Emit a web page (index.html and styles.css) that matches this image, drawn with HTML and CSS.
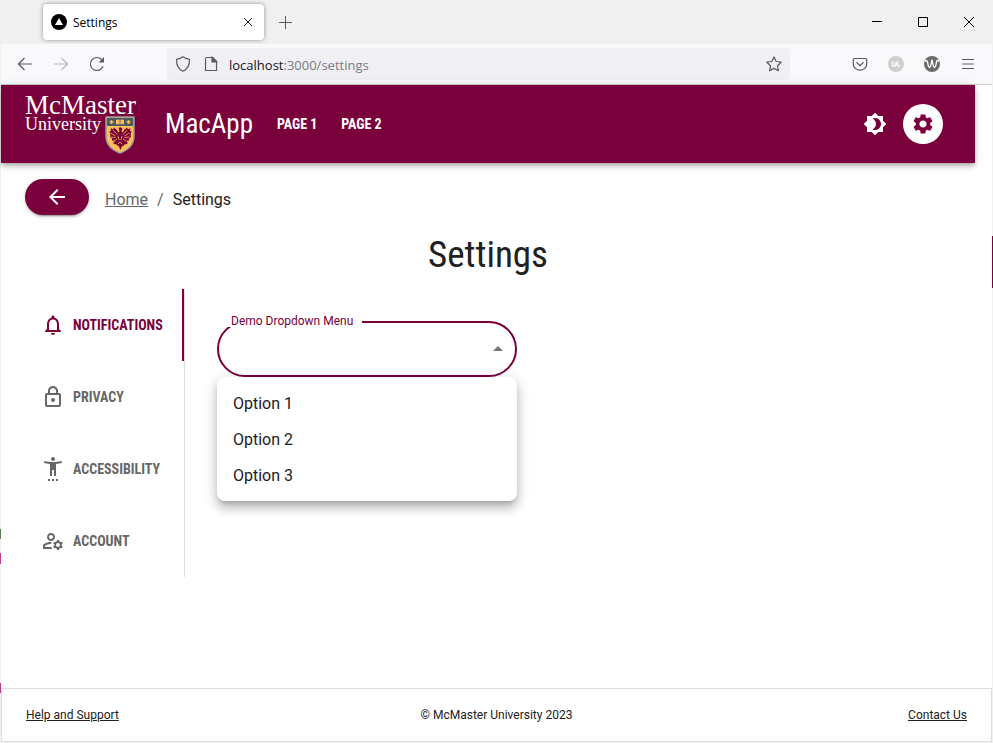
FILE: index.html
```html
<!DOCTYPE html>
<html lang="en">
<head>
<meta charset="utf-8">
<title>Settings</title>
<link rel="stylesheet" href="styles.css">
</head>
<body>
<div class="window">
  <div class="titlebar">
    <div class="tab">
      <svg class="favicon" viewBox="0 0 16 16" aria-hidden="true"><circle cx="8" cy="8" r="8"/><path d="M8 4l4 7H4z" fill="#fff"/></svg>
      <span class="tab-title">Settings</span>
      <button class="tab-close" aria-label="Close tab"><svg width="10" height="10" viewBox="0 0 10 10"><path d="M1 1l8 8M9 1l-8 8" stroke="#222" fill="none"/></svg></button>
    </div>
    <button class="new-tab" aria-label="New tab"><svg width="13" height="13" viewBox="0 0 13 13"><path d="M6.500 0v13M0 6.500h13" stroke="#5b5b66" fill="none"/></svg></button>
    <div class="window-controls">
      <button aria-label="Minimize"><svg width="12" height="12" viewBox="0 0 12 12"><path d="M1 5.500h10" stroke="#000"/></svg></button>
      <button aria-label="Maximize"><svg width="12" height="12" viewBox="0 0 12 12"><path d="M1.500 1.500h9v9h-9z" stroke="#000" fill="none"/></svg></button>
      <button aria-label="Close"><svg width="12" height="12" viewBox="0 0 12 12"><path d="M1 1l10 10M11 1L1 11" stroke="#000"/></svg></button>
    </div>
  </div>
  <div class="toolbar">
    <button class="tool" aria-label="Back"><svg class="line" viewBox="0 0 16 16"><path d="M15 8H1.500M7.500 2l-6 6 6 6"/></svg></button>
    <button class="tool faded" aria-label="Forward"><svg class="line" viewBox="0 0 16 16"><path d="M1 8h13.500M8.500 2l6 6-6 6"/></svg></button>
    <button class="tool" aria-label="Reload"><svg class="line" viewBox="0 0 16 16"><path d="M14 10.200A6.500 6.500 0 1 1 12.600 3.500"/><path d="M15 1v5.500H9.500z" fill="#5b5b66" stroke="none"/></svg></button>
    <div class="address">
      <svg class="line" viewBox="0 0 16 16" aria-hidden="true"><path d="M8 .8c2 1.600 4 2.200 6.500 2.500C14.700 8.500 13 13 8 15.300 3 13 1.300 8.500 1.500 3.300 4 3 6 2.400 8 .8z"/></svg>
      <svg class="line page-icon" viewBox="0 0 16 16" aria-hidden="true"><path d="M4 1.500h5.500L13.500 5.500v9h-11V3q0-1.500 1.500-1.500z"/><path d="M9 1v5h5z" fill="#5b5b66"/></svg>
      <span class="url">localhost<span class="url-rest">:3000/settings</span></span>
      <button class="star" aria-label="Bookmark"><svg class="line" viewBox="0 0 16 16"><path d="M8 .9l2.200 4.600 5 .7-3.700 3.500.9 5.100L8 12.400l-4.400 2.400.9-5.100L.8 6.200l5-.7z"/></svg></button>
    </div>
    <div class="extensions">
      <button class="tool" aria-label="Save to Pocket"><svg class="line" viewBox="0 0 16 16"><path d="M2.500 2.500h11q1.200 0 1.200 1.200V8a6.700 6.200 0 0 1-13.400 0V3.700q0-1.200 1.200-1.200zM4.500 6.300L8 9.700l3.500-3.400"/></svg></button>
      <button class="tool" aria-label="Extension"><svg viewBox="0 0 16 16"><circle cx="8" cy="8" r="8" fill="#cfcfcf"/><path d="M4.500 5v3q0 2 1.700 2T8 8V6M9.500 5v3.500q0 1.500 1.500 1.500h1" fill="none" stroke="#f5f5f5" stroke-width="1.800"/></svg></button>
      <button class="tool" aria-label="Extension"><svg viewBox="0 0 16 16"><circle cx="8" cy="8" r="8" fill="#6b6b6b"/><path d="M1 5.500Q3 3 3.700 7T5.500 11.500Q6.800 11 8 4q1.200 7 2.500 7.500 1.100 0 1.800-4.500T15 5.500" fill="none" stroke="#fff" stroke-width="1.400" stroke-linejoin="round"/></svg></button>
      <button class="tool" aria-label="Menu"><svg class="line" viewBox="0 0 16 16"><path d="M2 3.500h12M2 8h12M2 12.500h12"/></svg></button>
    </div>
  </div>

  <div class="page">
    <header class="app-bar">
      <a class="logo" href="#" aria-label="McMaster University">
        <span class="logo-name">McMaster</span>
        <span class="logo-sub">University
          <svg class="crest" viewBox="0 0 30 38" aria-hidden="true">
            <path d="M1 1h28v19c0 8-6 14-14 17C7 34 1 28 1 20z" fill="#fdbf57" stroke="#9b9b98" stroke-width="1.500"/>
            <path d="M2 2h26v8H2z" fill="#4c5963"/>
            <path d="M11 4q2-1 4 0 2-1 4 0v4.500q-2-1-4 0-2-1-4 0z" fill="#fdbf57"/>
            <path d="M15 4v4.500" stroke="#4c5963" stroke-width=".8"/>
            <path d="M6.500 4v4M4.500 6h4M23.500 4v4M21.500 6h4" stroke="#fdbf57" stroke-width="1.500"/>
            <path d="M15 11l2.500 1.500-1 3 1.500 1 1-2.500 3-2.500 1 2 2.500-1.500-.5 3 1.500 0-1 4 .5 2-2 1.500 0 2-3 .5 2 2-2 1.500-1.500-.5-.5 2-1.500-.5-2 4.500-2-4.500-1.500.5-.5-2-1.500.5-2-1.500 2-2-3-.5 0-2-2-1.500.5-2-1-4 1.500 0-.5-3 2.500 1.500 1-2 3 2.500 1 2.500 1.500-1-1-3z" fill="#7a003c"/>
            <path d="M5.500 17l5 3M5.500 21l5 .5M24.500 17l-5 3M24.500 21l-5 .5M8 14l4 4.500M22 14l-4 4.500M13 20l1 4M17 20l-1 4M9 25l3-2M21 25l-3-2M13 28l2-2 2 2" fill="none" stroke="#fdbf57" stroke-width=".8"/>
          </svg>
        </span>
      </a>
      <a class="brand" href="#">MacApp</a>
      <nav class="pages">
        <a href="#">PAGE 1</a>
        <a href="#">PAGE 2</a>
      </nav>
      <div class="actions">
        <button class="theme" aria-label="Toggle theme"><svg class="icon" viewBox="0 0 24 24"><path d="M20 8.690V4h-4.690L12 .69 8.690 4H4v4.690L.69 12 4 15.310V20h4.690L12 23.310 15.310 20H20v-4.690L23.310 12 20 8.690zM12 18c-.89 0-1.740-.2-2.500-.55C11.560 16.500 13 14.420 13 12s-1.440-4.500-3.500-5.450C10.260 6.200 11.110 6 12 6c3.310 0 6 2.690 6 6s-2.690 6-6 6z"/></svg></button>
        <button class="gear" aria-label="Settings"><svg class="icon" viewBox="0 0 24 24"><path d="M19.140 12.940c.04-.3.06-.61.06-.94 0-.32-.02-.64-.07-.94l2.030-1.580c.18-.14.23-.41.12-.61l-1.920-3.320c-.12-.22-.37-.29-.59-.22l-2.390.96c-.5-.38-1.030-.7-1.620-.94l-.36-2.540c-.04-.24-.24-.41-.48-.41h-3.840c-.24 0-.43.17-.47.41l-.36 2.540c-.59.24-1.130.57-1.620.94l-2.390-.96c-.22-.08-.47 0-.59.22L2.740 8.870c-.12.21-.08.47.12.61l2.030 1.580c-.05.3-.09.63-.09.94s.02.64.07.94l-2.030 1.580c-.18.14-.23.41-.12.61l1.920 3.320c.12.22.37.29.59.22l2.390-.96c.5.38 1.030.7 1.620.94l.36 2.540c.05.24.24.41.48.41h3.840c.24 0 .44-.17.47-.41l.36-2.540c.59-.24 1.130-.56 1.620-.94l2.390.96c.22.08.47 0 .59-.22l1.920-3.320c.12-.22.07-.47-.12-.61l-2.010-1.580zM12 15.600c-1.980 0-3.600-1.620-3.600-3.600s1.620-3.600 3.600-3.600 3.600 1.620 3.600 3.600-1.620 3.600-3.600 3.600z"/></svg></button>
      </div>
    </header>

    <main class="content">
      <div class="crumb-row">
        <button class="back" aria-label="Go back"><svg class="icon" viewBox="0 0 24 24"><path d="M20 11H7.830l5.590-5.590L12 4l-8 8 8 8 1.410-1.410L7.830 13H20v-2z"/></svg></button>
        <nav class="crumbs" aria-label="Breadcrumb"><a href="#">Home</a><span class="slash">/</span><span>Settings</span></nav>
      </div>
      <h1>Settings</h1>
      <div class="settings">
        <div class="side-tabs" role="tablist" aria-orientation="vertical">
          <button class="side-tab active" role="tab" aria-selected="true"><svg class="icon" viewBox="0 0 24 24"><path d="M12 22c1.100 0 2-.9 2-2h-4c0 1.100.9 2 2 2zm6-6v-5c0-3.070-1.630-5.640-4.500-6.320V4c0-.83-.67-1.500-1.500-1.500s-1.500.67-1.500 1.500v.68C7.640 5.360 6 7.920 6 11v5l-2 2v1h16v-1l-2-2zm-2 1H8v-6c0-2.480 1.510-4.500 4-4.500s4 2.020 4 4.500v6z"/></svg>NOTIFICATIONS</button>
          <button class="side-tab" role="tab" aria-selected="false"><svg class="icon" viewBox="0 0 24 24"><path d="M18 8h-1V6c0-2.760-2.240-5-5-5S7 3.240 7 6v2H6c-1.100 0-2 .9-2 2v10c0 1.100.9 2 2 2h12c1.100 0 2-.9 2-2V10c0-1.100-.9-2-2-2zM9 6c0-1.660 1.340-3 3-3s3 1.340 3 3v2H9V6zm9 14H6V10h12v10zm-6-3c1.100 0 2-.9 2-2s-.9-2-2-2-2 .9-2 2 .9 2 2 2z"/></svg>PRIVACY</button>
          <button class="side-tab" role="tab" aria-selected="false"><svg class="icon" viewBox="0 0 24 24"><path d="M20.500 4c-2.610.7-5.670 1-8.500 1s-5.890-.3-8.500-1L3 6c1.860.5 4 .83 6 1v12h2v-6h2v6h2V7c2-.17 4.140-.5 6-1l-.5-2zM12 4c1.100 0 2-.9 2-2s-.9-2-2-2-2 .9-2 2 .9 2 2 2zM7 24h2v-2H7v2zm4 0h2v-2h-2v2zm4 0h2v-2h-2v2z"/></svg>ACCESSIBILITY</button>
          <button class="side-tab" role="tab" aria-selected="false"><svg class="icon" viewBox="0 0 24 24"><path d="M4 18v-.65c0-.34.16-.66.41-.81C6.100 15.530 8.030 15 10 15c.03 0 .05 0 .08.01.1-.7.3-1.370.59-1.980-.22-.02-.44-.03-.67-.03-2.420 0-4.680.67-6.610 1.820-.88.52-1.390 1.500-1.390 2.530V20h9.260c-.42-.6-.75-1.280-.97-2H4zM10 12c2.210 0 4-1.790 4-4s-1.790-4-4-4-4 1.790-4 4 1.790 4 4 4zm0-6c1.100 0 2 .9 2 2s-.9 2-2 2-2-.9-2-2 .9-2 2-2zM20.750 16c0-.22-.03-.42-.06-.63l1.140-1.010-1-1.730-1.450.49c-.32-.27-.68-.48-1.080-.63L18 11h-2l-.3 1.490c-.4.15-.76.36-1.080.63l-1.450-.49-1 1.730 1.140 1.010c-.03.21-.06.41-.06.63s.03.42.06.63l-1.140 1.010 1 1.730 1.450-.49c.32.27.68.48 1.080.63L16 21h2l.3-1.490c.4-.15.76-.36 1.080-.63l1.450.49 1-1.730-1.140-1.010c.03-.21.06-.41.06-.63zM17 18c-1.100 0-2-.9-2-2s.9-2 2-2 2 .9 2 2-.9 2-2 2z"/></svg>ACCOUNT</button>
        </div>
        <section class="panel" role="tabpanel">
          <div class="field">
            <select id="demo" class="select"><option></option><option>Option 1</option><option>Option 2</option><option>Option 3</option></select>
            <label class="field-label" for="demo">Demo Dropdown Menu</label>
            <svg class="icon caret" viewBox="0 0 24 24" aria-hidden="true"><path d="M7 14l5-5 5 5z"/></svg>
            <ul class="menu" role="listbox" aria-label="Demo Dropdown Menu">
              <li role="option">Option 1</li>
              <li role="option">Option 2</li>
              <li role="option">Option 3</li>
            </ul>
          </div>
        </section>
      </div>
    </main>

    <footer class="footer">
      <a href="#">Help and Support</a>
      <span>© McMaster University 2023</span>
      <a href="#">Contact Us</a>
    </footer>
  </div>
</div>
</body>
</html>
```
FILE: styles.css
```css
:root {
  --maroon: #7a003c;
  --ink: #212121;
  --muted: #666;
  --chrome: #5b5b66;
  --condensed: "Roboto Condensed", "Liberation Sans Narrow", Roboto, sans-serif;
}

* { box-sizing: border-box; }

/* Slivers of the desktop show on both sides of the window */
body {
  margin: 0;
  padding: 0 1px;
  background:
    linear-gradient(var(--maroon), var(--maroon)) 100% 236px / 1px 52px no-repeat,
    linear-gradient(#c0408c, #c0408c) 0 553px / 1px 11px no-repeat,
    linear-gradient(#5f7f4f, #5f7f4f) 0 529px / 1px 10px no-repeat,
    linear-gradient(#c0408c, #c0408c) 0 683px / 1px 10px no-repeat,
    #f0f0f0;
  color: var(--ink);
  font: 16px/24px Roboto, sans-serif;
}

button {
  padding: 0;
  border: 0;
  background: none;
  color: inherit;
  font: inherit;
  cursor: pointer;
}

a { color: inherit; }
svg { flex: none; display: block; }

.icon { width: 24px; height: 24px; fill: currentColor; }

.window {
  display: flex;
  flex-direction: column;
  min-height: 100vh;
}

/* Browser frame */
.titlebar {
  display: flex;
  align-items: center;
  height: 44px;
  padding-left: 42px;
  background: #f0f0f0;
}

.tab {
  display: flex;
  align-items: center;
  gap: 6px;
  width: 221px;
  height: 36px;
  padding: 0 8px;
  border-radius: 4px;
  background: #fff;
  box-shadow: 0 0 4px rgba(0, 0, 0, .4);
  color: #000;
  font: 12px/16px "Open Sans", sans-serif;
}

.favicon { width: 16px; height: 16px; }
.tab-title { flex: 1; padding-top: 2px; }

.tab-close,
.new-tab,
.window-controls button,
.tool {
  display: flex;
  align-items: center;
  justify-content: center;
}

.tab-close { width: 16px; height: 16px; }
.new-tab { width: 42px; height: 36px; }
.window-controls { display: flex; margin-left: auto; }
.window-controls button { width: 46px; height: 44px; }

.toolbar {
  display: flex;
  align-items: center;
  height: 41px;
  padding: 0 6px;
  border-bottom: 1px solid #ccc;
  background: #f9f9fb;
}

.tool { width: 36px; height: 32px; }
.tool svg { width: 16px; height: 16px; }
.faded { opacity: .4; }

.line {
  width: 16px;
  height: 16px;
  fill: none;
  stroke: var(--chrome);
  stroke-width: 1.2;
  stroke-linejoin: round;
}

.address {
  display: flex;
  flex: 1;
  align-items: center;
  height: 32px;
  margin: 0 52px;
  padding: 0 8px;
  border-radius: 4px;
  background: #f0f0f4;
  font: 13px/20px "Open Sans", sans-serif;
}

.page-icon { margin: 0 10px 0 12px; }
.url { flex: 1; padding-top: 2px; color: #15141a; }
.url-rest { color: #7b7b82; }
.extensions { display: flex; }

/* Application */
.page {
  display: flex;
  flex: 1;
  flex-direction: column;
  margin-bottom: 1px;
  background: #fff;
}

.app-bar {
  display: flex;
  align-items: center;
  height: 78px;
  margin-right: 17px;
  padding: 0 32px 0 24px;
  background: var(--maroon);
  box-shadow: 0 2px 4px -1px rgba(0, 0, 0, .2), 0 4px 5px rgba(0, 0, 0, .14), 0 1px 10px rgba(0, 0, 0, .12);
  color: #fff;
}

.app-bar a { text-decoration: none; }

.logo {
  display: flex;
  flex-direction: column;
  width: 110px;
  height: 60px;
  font-family: "Liberation Serif", serif;
}

.logo-name { font-size: 27px; line-height: 22px; }
.logo-sub { position: relative; font-size: 18px; line-height: 16px; }

.crest {
  position: absolute;
  top: 0;
  right: 0;
  width: 30px;
  height: 38px;
}

.brand {
  margin-left: 30px;
  font: 27px/36px var(--condensed);
}

.pages {
  display: flex;
  gap: 24px;
  margin-left: 24px;
  font: bold 14px/24px var(--condensed);
}

.actions {
  display: flex;
  align-items: center;
  gap: 16px;
  margin-left: auto;
}

.gear {
  display: flex;
  align-items: center;
  justify-content: center;
  width: 40px;
  height: 40px;
  border-radius: 50%;
  background: #fff;
  color: var(--maroon);
}

.content { flex: 1; margin-right: 17px; padding: 16px 24px; }
.crumb-row { display: flex; gap: 16px; }

.back {
  display: flex;
  align-items: center;
  justify-content: center;
  width: 64px;
  height: 36px;
  border-radius: 18px;
  background: var(--maroon);
  box-shadow: 0 3px 1px -2px rgba(0, 0, 0, .2), 0 2px 2px rgba(0, 0, 0, .14), 0 1px 5px rgba(0, 0, 0, .12);
  color: #fff;
}

.crumbs { display: flex; gap: 9px; padding-top: 9px; }
.crumbs a,
.slash { color: var(--muted); }

h1 {
  margin: 16px 0 10px;
  font: 37px/48px var(--condensed);
  text-align: center;
}

.settings { display: flex; }

.side-tabs {
  display: flex;
  flex-direction: column;
  width: 160px;
  border-right: 1px solid #ddd;
}

.side-tab {
  display: flex;
  align-items: center;
  gap: 8px;
  height: 72px;
  padding-left: 16px;
  border-right: 2px solid transparent;
  color: var(--muted);
  font: bold 14px/18px var(--condensed);
}

.side-tab.active { border-color: var(--maroon); color: var(--maroon); }

.panel { flex: 1; padding: 32px; }
.field { position: relative; max-width: 300px; }

.select {
  display: block;
  width: 100%;
  height: 56px;
  padding: 0 32px 0 14px;
  border: 2px solid var(--maroon);
  border-radius: 28px;
  appearance: none;
  background: #fff;
  font: inherit;
}

.field-label {
  position: absolute;
  top: -6px;
  left: 9px;
  padding: 0 9px 0 5px;
  background: #fff;
  color: var(--maroon);
  font-size: 12px;
  line-height: 12px;
}

.caret {
  position: absolute;
  top: 16px;
  right: 7px;
  color: #757575;
  pointer-events: none;
}

.menu {
  position: absolute;
  top: 100%;
  right: 0;
  left: 0;
  margin: 0;
  padding: 8px 0;
  border-radius: 8px;
  background: #fff;
  box-shadow: 0 5px 5px -3px rgba(0, 0, 0, .2), 0 8px 10px 1px rgba(0, 0, 0, .14), 0 3px 14px 2px rgba(0, 0, 0, .12);
  list-style: none;
}

.menu li { padding: 7px 16px 5px; }

.footer {
  display: grid;
  grid-template-columns: 1fr auto 1fr;
  align-items: center;
  height: 54px;
  padding: 0 24px;
  border: 1px solid #ddd;
  font-size: 12px;
  line-height: 20px;
}

.footer a:last-child { justify-self: end; }
```
